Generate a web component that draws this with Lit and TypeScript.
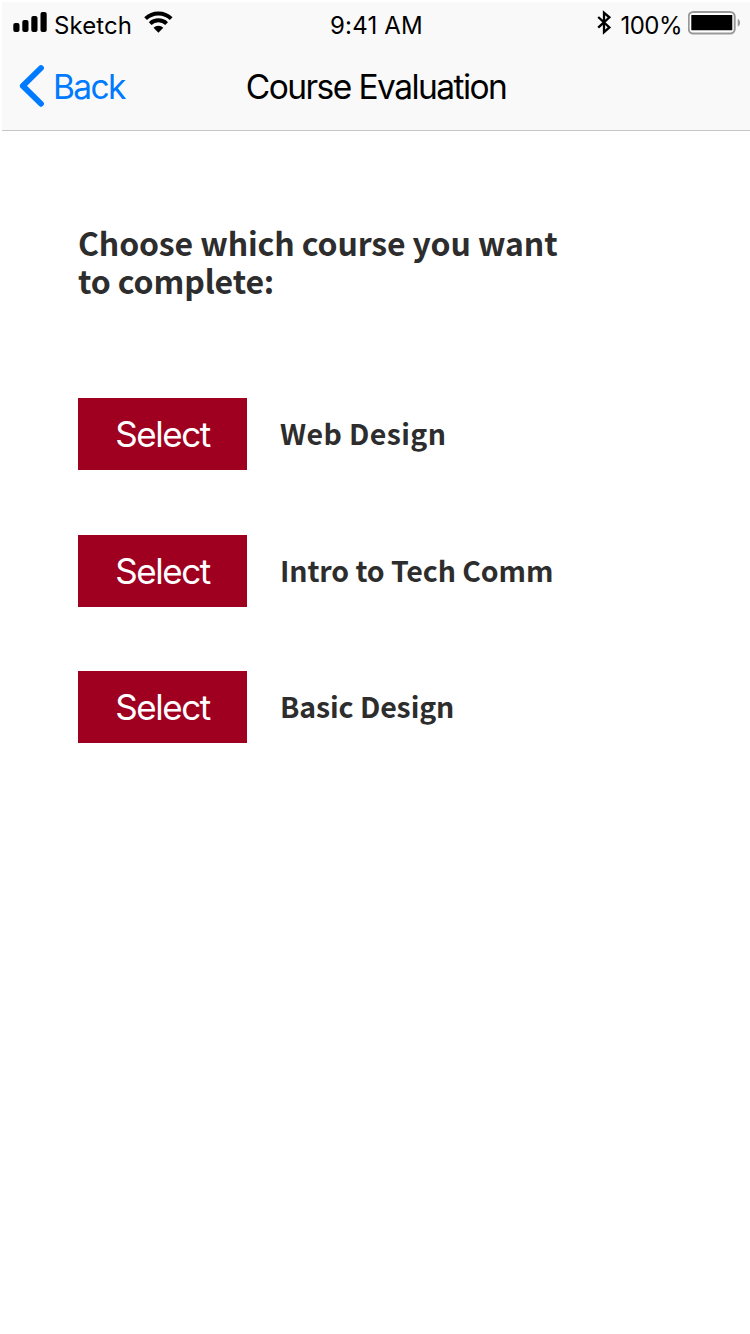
import { LitElement, html, css, svg } from "lit";
import { customElement, property } from "lit/decorators.js";

@customElement("status-bar")
class StatusBar extends LitElement {
  static styles = css`
    :host { display: grid; grid-template-columns: 1fr auto 1fr; height: 44px; font-size: 24px; line-height: 44px; color: #000; }
    .side { display: flex; align-items: flex-start; }
    .end { justify-content: flex-end; }
    svg { display: block; flex: none; }
    .signal { margin: 10px 0 0 11px; }
    .carrier { margin: 2px 0 0 7px; letter-spacing: 0.1px; white-space: nowrap; }
    .wifi { margin: 9px 0 0 12px; }
    .time { margin: 2px 0 0 1px; letter-spacing: 0.2px; white-space: nowrap; }
    .bluetooth { margin: 8px 8px 0 0; }
    .percent { margin: 2px 6px 0 0; letter-spacing: -0.5px; }
    .battery { margin: 8px 9px 0 0; }
  `;
  render() {
    return html`
      <div class="side">
        <svg class="signal" width="34" height="22" viewBox="0 0 34 22">
          ${[[0.3, 11, 9], [9.3, 8, 12], [18.3, 4, 16], [27.5, 0, 20]].map(
            ([x, y, h]) => svg`<rect x=${x} y=${y} width="6.2" height=${h} rx="2"></rect>`
          )}
        </svg>
        <span class="carrier">Sketch</span>
        <svg class="wifi" width="30" height="22" viewBox="0 0 30 22" fill="none" stroke="#000" stroke-width="4">
          <path d="M1.6 7.6a18.600 18.600 0 0 1 25.600 0"></path>
          <path d="M6.200 12.600a12 12 0 0 1 16.400 0"></path>
          <path fill="#000" stroke="none" d="M9.500 16.800a7 7 0 0 1 9.800 0L14.400 21.700z"></path>
        </svg>
      </div>
      <span class="time">9:41 AM</span>
      <div class="side end">
        <svg class="bluetooth" width="16" height="26" viewBox="0 0 16 26" fill="none" stroke="#000" stroke-width="2.3">
          <path d="M2.200 7l11.200 10.400-5.400 4.800V2.800l5.400 4.600-11.200 10.200"></path>
        </svg>
        <span class="percent">100%</span>
        <svg class="battery" width="53" height="26" viewBox="0 0 53 26">
          <rect x="0.700" y="2" width="46" height="21.500" rx="4.500" fill="#fff" stroke="#999" stroke-width="2"></rect>
          <rect x="3.300" y="5" width="41" height="15.300" rx="0.500"></rect>
          <path d="M49.700 9c3.200 1.200 3.200 6.400 0 7.600z" fill="#999"></path>
        </svg>
      </div>
    `;
  }
}

@customElement("nav-bar")
class NavBar extends LitElement {
  @property() heading = "";
  static styles = css`
    :host { display: grid; grid-template-columns: 1fr auto 1fr; height: 84px; font-size: 33.5px; line-height: 83px; border-bottom: 1px solid #c6c6c8; }
    .back { display: flex; align-items: flex-start; color: #007aff; letter-spacing: -1.6px; }
    .chevron { display: block; margin: 18px 8px 0 17px; }
    .title { letter-spacing: -1.55px; white-space: nowrap; }
  `;
  render() {
    return html`
      <div class="back">
        <svg class="chevron" width="26" height="44" viewBox="0 0 26 44" fill="none" stroke="currentColor" stroke-width="5.800" stroke-linecap="round" stroke-linejoin="round">
          <path d="M22 4L3.800 21.900 22 39.800"></path>
        </svg>
        <span>Back</span>
      </div>
      <span class="title">${this.heading}</span>
    `;
  }
}

@customElement("course-row")
class CourseRow extends LitElement {
  @property() name = "";
  static styles = css`
    :host { display: flex; align-items: center; gap: 33px; height: 72px; }
    .select { width: 169px; height: 72px; padding: 0; border: 0; background: #a00020; color: #fff; font: 35px/72px Inter, sans-serif; letter-spacing: -1.45px; text-align: center; }
    .name { padding-bottom: 2px; font: 600 28.5px/40px "Noto Sans CJK JP", "Noto Sans", sans-serif; color: #2d2d2d; white-space: nowrap; }
  `;
  render() {
    return html`<button class="select">Select</button><span class="name">${this.name}</span>`;
  }
}

@customElement("app-root")
class AppRoot extends LitElement {
  static styles = css`
    :host { display: block; height: 1334px; background: #fff; font-family: Inter, "Liberation Sans", sans-serif; overflow: hidden; }
    .header { margin: 2px 0 0 2px; background: #f9f9f9; }
    .content { padding: 92px 78px 0; }
    .prompt { margin: 0; height: 175px; font: 600 32px/38px "Noto Sans CJK JP", "Noto Sans", sans-serif; letter-spacing: -0.13px; color: #2d2d2d; white-space: nowrap; }
    .courses { display: flex; flex-direction: column; gap: 64.500px; letter-spacing: -0.1px; }
    .courses > :first-child { letter-spacing: 0.4px; }
  `;
  render() {
    return html`
      <header class="header">
        <status-bar></status-bar>
        <nav-bar heading="Course Evaluation"></nav-bar>
      </header>
      <main class="content">
        <h1 class="prompt">Choose which course you want<br />to complete:</h1>
        <div class="courses">
          ${["Web Design", "Intro to Tech Comm", "Basic Design"].map((n) => html`<course-row name=${n}></course-row>`)}
        </div>
      </main>
    `;
  }
}
